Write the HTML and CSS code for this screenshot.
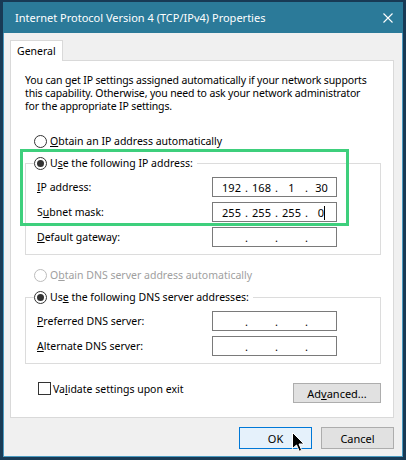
FILE: index.html
```html
<!DOCTYPE html>
<html lang="en">
<head>
    <meta charset="UTF-8">
    <meta name="viewport" content="width=device-width, initial-scale=1.0">
    <title>Internet Protocol Version 4 (TCP/IPv4) Properties</title>
    <link rel="stylesheet" href="styles.css">
</head>
<body>

<div class="window">
    <div class="titlebar">
        <span class="title">Internet Protocol Version 4 (TCP/IPv4) Properties</span>
        <svg class="close" width="10" height="10" viewBox="0 0 10 10">
            <path d="M0.5 0.5 L9.5 9.5 M9.5 0.5 L0.5 9.5" stroke="#fff" stroke-width="1.1"/>
        </svg>
    </div>

    <div class="content">
        <div class="tabs">
            <div class="tab">General</div>
        </div>

        <div class="panel">
            <p class="intro">You can get IP settings assigned automatically if your network supports<br>
                this capability. Otherwise, you need to ask your network administrator<br>
                for the appropriate IP settings.</p>

            <div class="option"><span class="radio"></span><span><u>O</u>btain an IP address automatically</span></div>

            <fieldset class="group">
                <legend class="option"><span class="radio checked"></span><span>U<u>s</u>e the following IP address:</span></legend>
                <div class="row">
                    <label><u>I</u>P address:</label>
                    <div class="ip"><span>192</span><i>.</i><span>168</span><i>.</i><span>1</span><i>.</i><span>30</span></div>
                </div>
                <div class="row">
                    <label>S<u>u</u>bnet mask:</label>
                    <div class="ip"><span>255</span><i>.</i><span>255</span><i>.</i><span>255</span><i>.</i><span class="caret">0</span></div>
                </div>
                <div class="row">
                    <label><u>D</u>efault gateway:</label>
                    <div class="ip"><span></span><i>.</i><span></span><i>.</i><span></span><i>.</i><span></span></div>
                </div>
            </fieldset>

            <div class="option disabled"><span class="radio"></span><span>O<u>b</u>tain DNS server address automatically</span></div>

            <fieldset class="group">
                <legend class="option"><span class="radio checked"></span><span>Us<u>e</u> the following DNS server addresses:</span></legend>
                <div class="row">
                    <label><u>P</u>referred DNS server:</label>
                    <div class="ip"><span></span><i>.</i><span></span><i>.</i><span></span><i>.</i><span></span></div>
                </div>
                <div class="row">
                    <label><u>A</u>lternate DNS server:</label>
                    <div class="ip"><span></span><i>.</i><span></span><i>.</i><span></span><i>.</i><span></span></div>
                </div>
            </fieldset>

            <div class="bottom-row">
                <div class="check-row"><span class="checkbox"></span><span>Va<u>l</u>idate settings upon exit</span></div>
                <button class="btn advanced">Ad<u>v</u>anced...</button>
            </div>

            <!-- green highlight drawn over the IP address group -->
            <div class="highlight"></div>
        </div>

        <div class="dialog-buttons">
            <button class="btn default">OK</button>
            <button class="btn">Cancel</button>
        </div>
    </div>

    <svg class="cursor" width="13" height="21" viewBox="-0.5 -0.5 13 21">
        <path d="M0 0 L0 16 L4 12.5 L6.8 18.8 L9.2 17.8 L6.5 11.5 L11.5 11.5 Z" fill="#000" stroke="#fff" stroke-width="1" stroke-linejoin="round"/>
    </svg>
</div>

</body>
</html>
```

FILE: styles.css
```css
body {
    margin: 0;
    background-color: #183a55;
    font-family: "Noto Sans", "DejaVu Sans", sans-serif;
    font-size: 10.5px;
    color: #000;
}
.window {
    position: relative;
    box-sizing: border-box;
    width: 400px;
    height: 455px;
    margin: 2px 0 0 3px;
    background: #f0f0f0;
    border: 1px solid #4b9ac0;
    border-top: none;
}
.titlebar {
    height: 31px;
    margin: 0 -1px;
    background: #2b7a99;
    display: flex;
    align-items: center;
    justify-content: space-between;
    padding: 0 10px 0 12px;
}
.title {
    color: #fff;
    font-size: 11px;
    line-height: 14px;
    white-space: nowrap;
}
.close {
    display: block;
}
.content {
    padding: 7px 8px 0 6px;
}
.tabs {
    display: flex;
    margin-bottom: -1px;
}
.tab {
    position: relative;
    z-index: 1;
    height: 20px;
    line-height: 20px;
    padding: 0 6px;
    background: #fff;
    border: 1px solid #d9d9d9;
    border-bottom: none;
}
.panel {
    position: relative;
    background: #fff;
    border: 1px solid #d9d9d9;
    padding: 13px 12px 14px 14px;
}
.intro {
    margin: 0;
    line-height: 13px;
    white-space: nowrap;
    letter-spacing: -0.15px;
}
.option {
    display: flex;
    align-items: center;
    height: 14px;
    line-height: 14px;
    margin: 21px 0 0 9px;
    white-space: nowrap;
}
.option.disabled {
    margin-top: 13px;
    color: #a0a0a0;
}
.radio {
    box-sizing: border-box;
    width: 13px;
    height: 13px;
    border: 1px solid #333;
    border-radius: 50%;
    background: #fff;
    margin-right: 3px;
    display: flex;
    align-items: center;
    justify-content: center;
}
.radio.checked::after {
    content: "";
    width: 7px;
    height: 7px;
    border-radius: 50%;
    background: #333;
}
.disabled .radio {
    border-color: #bcbcbc;
}
.group {
    margin: 8px 0 0 0;
    padding: 7px 0 7px 8px;
    border: 1px solid #dcdcdc;
    min-width: 0;
}
.group legend.option {
    margin: 0;
    padding: 0 4px 0 0;
}
.row {
    display: flex;
    align-items: center;
    margin-left: 3px;
    height: 20px;
}
.row + .row {
    margin-top: 5px;
}
.row label {
    width: 175px;
}
.ip {
    box-sizing: border-box;
    display: flex;
    align-items: center;
    width: 125px;
    height: 20px;
    padding-left: 5px;
    border: 1px solid #7a7a7a;
    background: #fff;
    font-size: 11px;
}
.ip span {
    width: 27px;
    text-align: center;
}
.ip i {
    font-style: normal;
    width: 3px;
    text-align: center;
}
.caret::after {
    content: "";
    display: inline-block;
    width: 1px;
    height: 14px;
    background: #000;
    vertical-align: -3px;
}
.bottom-row {
    display: flex;
    justify-content: space-between;
    align-items: flex-start;
    margin-top: 18px;
}
.check-row {
    display: flex;
    align-items: center;
    height: 13px;
    margin-left: 13px;
}
.checkbox {
    box-sizing: border-box;
    width: 13px;
    height: 13px;
    border: 1px solid #333;
    background: #fff;
    margin-right: 2px;
}
.btn {
    box-sizing: border-box;
    font-family: inherit;
    font-size: 11px;
    color: #000;
    background: #e1e1e1;
    border: 1px solid #adadad;
    padding: 0;
    border-radius: 0;
}
.advanced {
    width: 88px;
    height: 20px;
    margin-top: 1px;
}
.dialog-buttons {
    display: flex;
    justify-content: flex-end;
    gap: 9px;
    margin-top: 9px;
}
.dialog-buttons .btn {
    width: 73px;
    height: 22px;
}
.btn.default {
    background: #e5f1fb;
    border-color: #0078d7;
}
.highlight {
    position: absolute;
    left: 9px;
    top: 88px;
    width: 323px;
    height: 71px;
    border: 3px solid #3ecf7c;
    pointer-events: none;
}
.cursor {
    position: absolute;
    left: 288px;
    top: 430px;
}
```
